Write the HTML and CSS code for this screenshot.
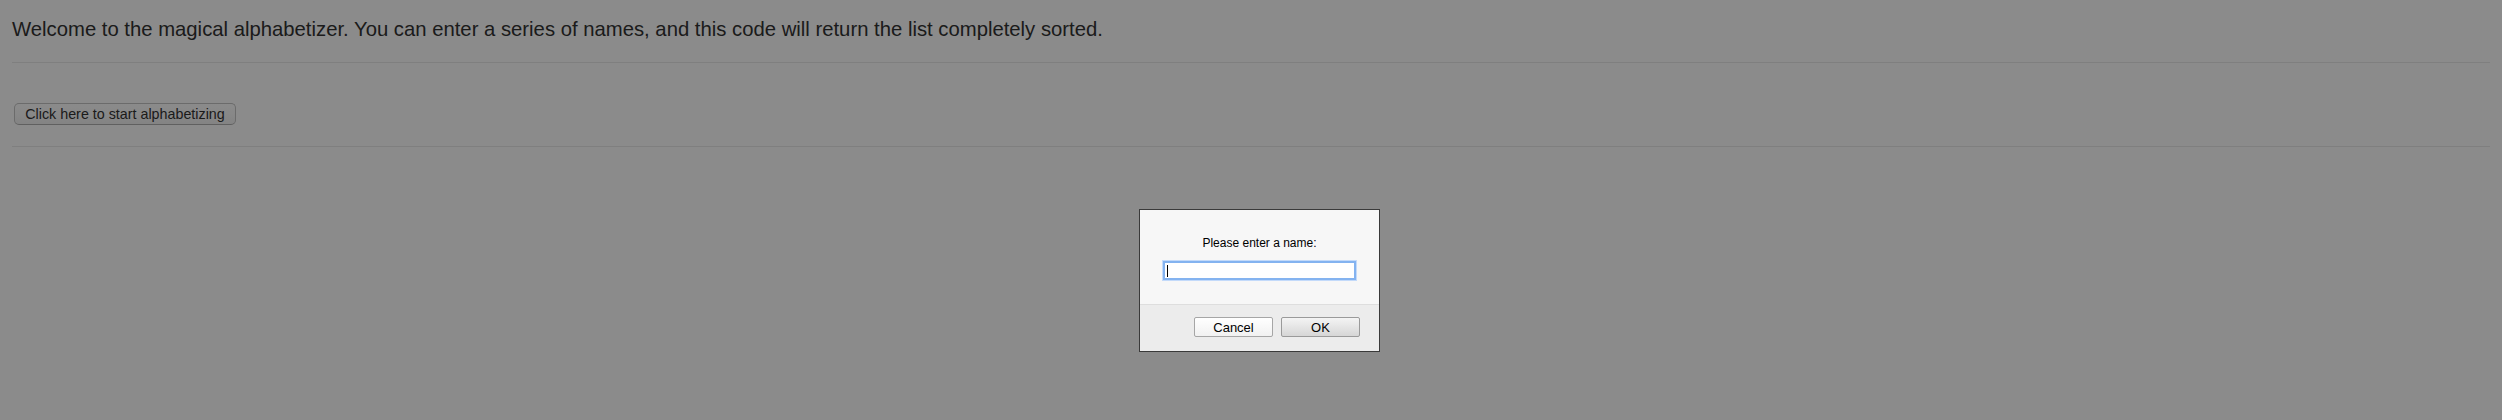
FILE: index.html
```html
<!DOCTYPE html>
<html>
<head>
<meta charset="utf-8">
<title>Alphabetizer</title>
<link rel="stylesheet" href="styles.css">
</head>
<body>
<div class="page">
  <p class="intro">Welcome to the magical alphabetizer. You can enter a series of names, and this code will return the list completely sorted.</p>
  <hr class="rule">
  <div class="actions">
    <button class="start-btn" type="button">Click here to start alphabetizing</button>
  </div>
  <hr class="rule">
</div>
<div class="overlay">
  <div class="dialog">
    <div class="dialog-body">
      <div class="dialog-label">Please enter a name:</div>
      <div class="dialog-input"><span class="caret"></span></div>
    </div>
    <div class="dialog-footer">
      <button class="dlg-btn" type="button">Cancel</button>
      <button class="dlg-btn dlg-ok" type="button">OK</button>
    </div>
  </div>
</div>
</body>
</html>
```
FILE: styles.css
```css
html, body {
  margin: 0;
  padding: 0;
  background: #ffffff;
}
body {
  font-family: "Liberation Sans", Arial, Helvetica, sans-serif;
  color: #333333;
  height: 420px;
  overflow: hidden;
}
.page {
  padding: 17px 12px 0 12px;
}
.intro {
  margin: 0;
  font-size: 20.3px;
  line-height: 24px;
  color: #333333;
}
.rule {
  margin: 21px 0 0 0;
  border: 0;
  border-top: 1px solid #e9e9e9;
  height: 0;
}
.actions {
  padding: 40px 0 21px 2px;
}
.actions + .rule {
  margin-top: 0;
}
.start-btn {
  display: block;
  box-sizing: border-box;
  width: 222px;
  height: 22px;
  margin: 0;
  padding: 0;
  text-align: center;
  font-family: "Liberation Sans", Arial, Helvetica, sans-serif;
  font-size: 14.3px;
  color: #333333;
  background: linear-gradient(#ffffff, #f2f2f2);
  border: 1px solid #c4c4c4;
  border-bottom-color: #b0b0b0;
  border-radius: 5px;
}
.overlay {
  position: fixed;
  inset: 0;
  background: rgba(0, 0, 0, 0.455);
  display: flex;
  justify-content: center;
  align-items: flex-start;
  padding: 209px 0 0 17px;
  box-sizing: border-box;
}
.dialog {
  width: 241px;
  box-sizing: border-box;
  border: 1px solid #3a3a3a;
  background: #f7f7f7;
  font-family: "Liberation Sans", Arial, Helvetica, sans-serif;
  color: #000000;
}
.dialog-body {
  padding: 25px 23px 24px 23px;
  display: flex;
  flex-direction: column;
  align-items: center;
  gap: 10px;
}
.dialog-label {
  font-size: 12px;
  line-height: 16px;
}
.dialog-input {
  box-sizing: border-box;
  width: 193px;
  height: 19px;
  background: #ffffff;
  border: 2px solid #84b3f0;
  box-shadow: 0 0 0 1px #c3dafa;
  display: flex;
  align-items: center;
  padding-left: 2px;
}
.caret {
  display: block;
  width: 1px;
  height: 12px;
  background: #000000;
}
.dialog-footer {
  border-top: 1px solid #dedede;
  background: #ececec;
  padding: 12px 19px 14px 0;
  display: flex;
  justify-content: flex-end;
  gap: 8px;
}
.dlg-btn {
  box-sizing: border-box;
  width: 79px;
  height: 20px;
  margin: 0;
  padding: 0;
  font-family: "Liberation Sans", Arial, Helvetica, sans-serif;
  font-size: 13px;
  color: #000000;
  background: linear-gradient(#ffffff, #f1f1f1);
  border: 1px solid #a6a6a6;
  border-radius: 2px;
}
.dlg-ok {
  background: linear-gradient(#f4f4f4, #d6d6d6);
  border-color: #9a9a9a;
}
```
